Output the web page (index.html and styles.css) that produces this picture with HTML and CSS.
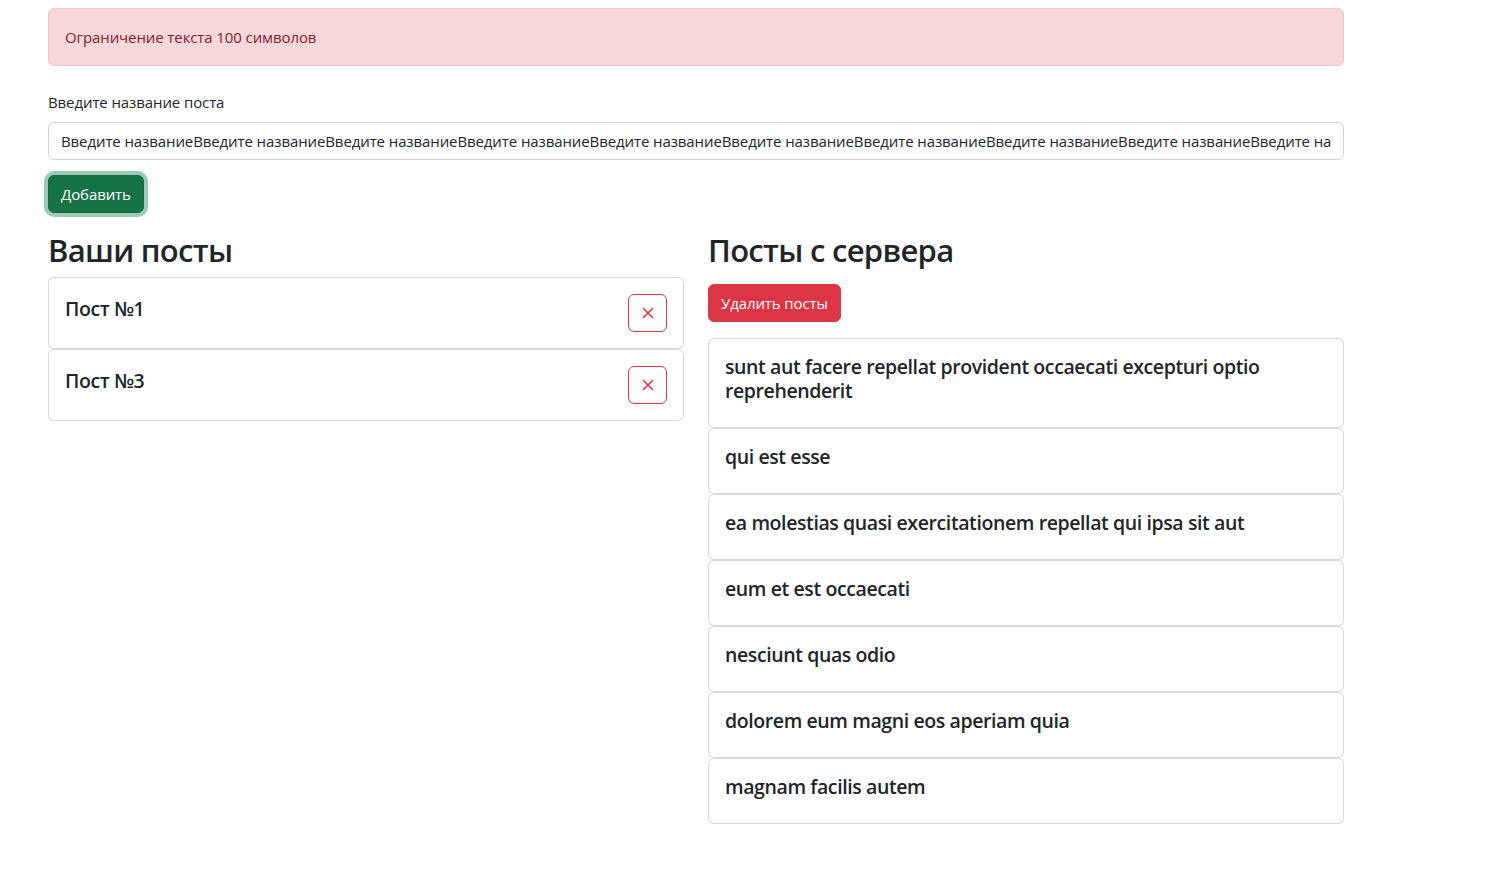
FILE: index.html
```html
<!DOCTYPE html>
<html lang="ru">
<head>
<meta charset="utf-8">
<title>Посты</title>
<link rel="stylesheet" href="styles.css">
</head>
<body>
<div class="page">
  <div class="alert">Ограничение текста 100 символов</div>
  <form class="form">
    <label class="form-label" for="title">Введите название поста</label>
    <input class="form-control" id="title" type="text" value="Введите названиеВведите названиеВведите названиеВведите названиеВведите названиеВведите названиеВведите названиеВведите названиеВведите названиеВведите названиеВведите название">
    <button type="button" class="btn btn-success">Добавить</button>
  </form>
  <div class="row">
    <div class="col">
      <h2 class="heading">Ваши посты</h2>
      <div class="card">
        <div class="card-body card-body-flex">
          <h5 class="card-title">Пост №1</h5>
          <button type="button" class="btn btn-outline-danger" aria-label="Удалить">
            <svg width="12" height="12" viewBox="0 0 12 12"><path d="M1.5 1.5 L10.5 10.5 M10.5 1.5 L1.5 10.5" stroke="#dc3545" stroke-width="1.6" fill="none" stroke-linecap="round"/></svg>
          </button>
        </div>
      </div>
      <div class="card">
        <div class="card-body card-body-flex">
          <h5 class="card-title">Пост №3</h5>
          <button type="button" class="btn btn-outline-danger" aria-label="Удалить">
            <svg width="12" height="12" viewBox="0 0 12 12"><path d="M1.5 1.5 L10.5 10.5 M10.5 1.5 L1.5 10.5" stroke="#dc3545" stroke-width="1.6" fill="none" stroke-linecap="round"/></svg>
          </button>
        </div>
      </div>
    </div>
    <div class="col">
      <h2 class="heading">Посты с сервера</h2>
      <button type="button" class="btn btn-danger">Удалить посты</button>
      <div class="server-list">
        <div class="card"><div class="card-body"><h5 class="card-title">sunt aut facere repellat provident occaecati excepturi optio reprehenderit</h5></div></div>
        <div class="card"><div class="card-body"><h5 class="card-title">qui est esse</h5></div></div>
        <div class="card"><div class="card-body"><h5 class="card-title">ea molestias quasi exercitationem repellat qui ipsa sit aut</h5></div></div>
        <div class="card"><div class="card-body"><h5 class="card-title">eum et est occaecati</h5></div></div>
        <div class="card"><div class="card-body"><h5 class="card-title">nesciunt quas odio</h5></div></div>
        <div class="card"><div class="card-body"><h5 class="card-title">dolorem eum magni eos aperiam quia</h5></div></div>
        <div class="card"><div class="card-body"><h5 class="card-title">magnam facilis autem</h5></div></div>
      </div>
    </div>
  </div>
</div>
</body>
</html>
```
FILE: styles.css
```css
* { box-sizing: border-box; }
html, body {
  margin: 0;
  background: #fff;
}
body {
  font-family: "Open Sans", "Noto Sans", sans-serif;
  font-size: 15px;
  line-height: 24px;
  color: #212529;
  letter-spacing: -0.1px;
}
.page {
  width: 1296px;
  margin-left: 48px;
  padding-top: 8px;
}
.alert {
  background: #f8d7da;
  border: 1px solid #f5c2c7;
  color: #842029;
  border-radius: 6px;
  padding: 16px;
  margin-bottom: 16px;
}
.form {
  padding-top: 8px;
  margin: 0;
}
.form-label {
  display: block;
  margin-bottom: 8px;
}
.form-control {
  display: block;
  width: 100%;
  height: 38px;
  padding: 6px 12px;
  font: inherit;
  letter-spacing: inherit;
  color: #212529;
  background: #fff;
  border: 1px solid #ced4da;
  border-radius: 6px;
  outline: none;
}
.btn {
  display: inline-flex;
  align-items: center;
  justify-content: center;
  height: 38px;
  padding: 6px 12px;
  font: inherit;
  letter-spacing: inherit;
  border: 1px solid transparent;
  border-radius: 6px;
  cursor: pointer;
}
.btn-success {
  margin-top: 15px;
  background: #157347;
  border-color: #146c43;
  color: #fff;
  box-shadow: 0 0 0 4px rgba(60, 153, 110, 0.5);
}
.btn-danger {
  margin-top: 7px;
  background: #dc3545;
  border-color: #dc3545;
  color: #fff;
}
.btn-outline-danger {
  width: 39px;
  padding: 0;
  background: #fff;
  border-color: #dc3545;
}
.row {
  display: grid;
  grid-template-columns: 636px 636px;
  column-gap: 24px;
  margin-top: 18px;
}
.heading {
  margin: 0 0 8px;
  font-size: 31px;
  font-weight: 600;
  line-height: 38.4px;
  letter-spacing: -0.7px;
}
.card {
  border: 1px solid rgba(0, 0, 0, 0.15);
  border-radius: 6px;
  background: #fff;
}
.card-body {
  padding: 16px;
}
.card-body-flex {
  display: flex;
  align-items: center;
  justify-content: space-between;
}
.card-title {
  margin: 0 0 8px;
  font-size: 19.5px;
  font-weight: 600;
  line-height: 24px;
  letter-spacing: -0.4px;
}
.server-list {
  margin-top: 16px;
}
```
